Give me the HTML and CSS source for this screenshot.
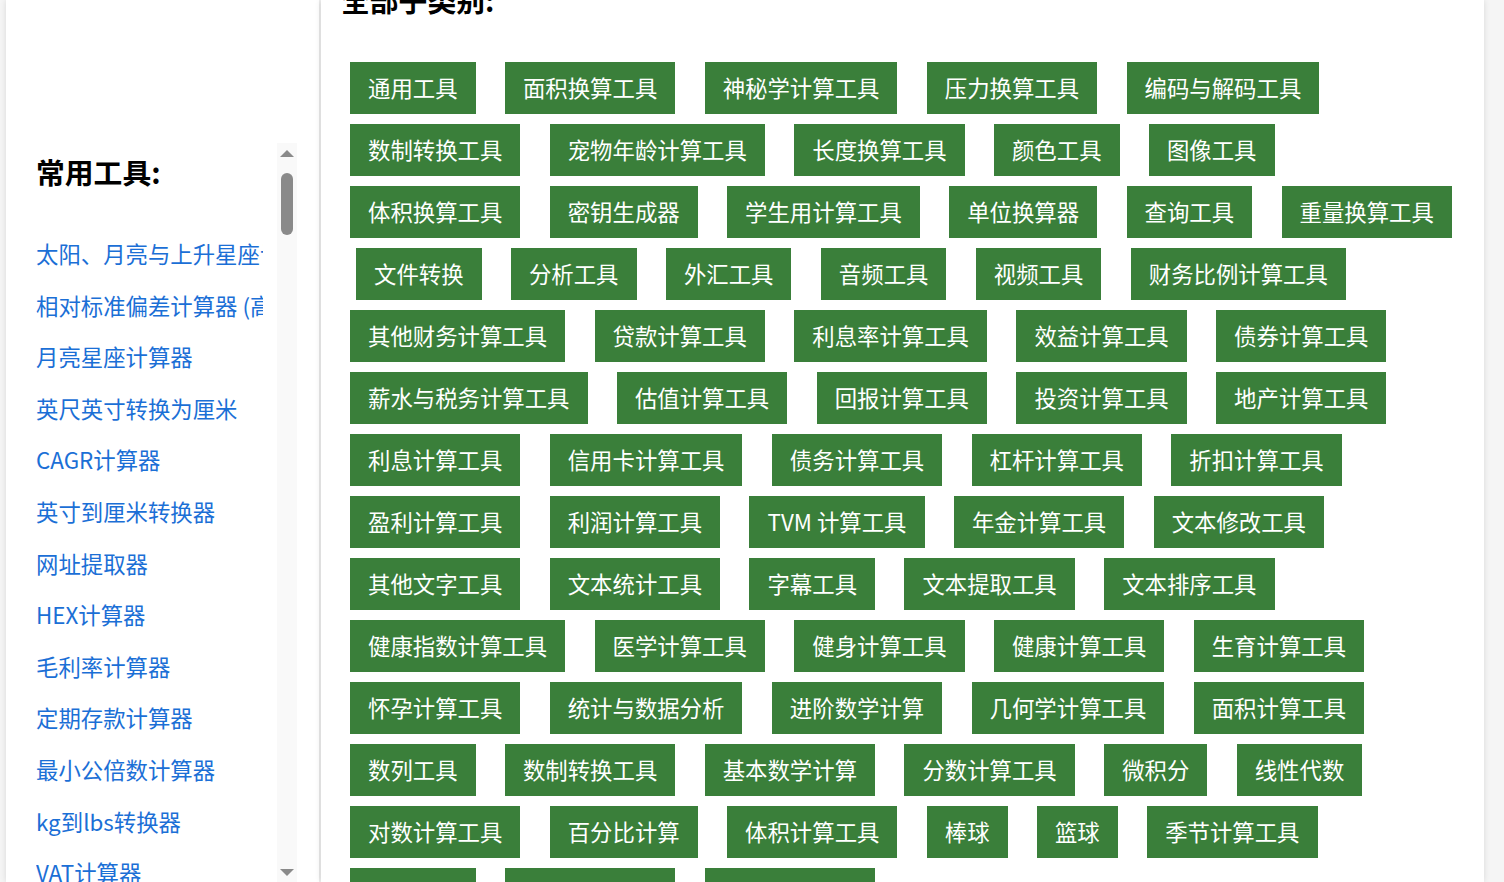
FILE: index.html
```html
<!DOCTYPE html>
<html lang="zh-CN">
<head>
<meta charset="utf-8">
<title>全部子类别</title>
<link rel="stylesheet" href="styles.css">
</head>
<body>
<div class="page">
  <aside class="sidebar">
    <div class="side-scroll">
      <div class="side-inner">
        <h2 class="side-title">常用工具:</h2>
        <ul class="tool-list">
          <li><a href="#">太阳、月亮与上升星座计算器</a></li>
          <li><a href="#">相对标准偏差计算器 (高级)</a></li>
          <li><a href="#">月亮星座计算器</a></li>
          <li><a href="#">英尺英寸转换为厘米</a></li>
          <li><a href="#">CAGR计算器</a></li>
          <li><a href="#">英寸到厘米转换器</a></li>
          <li><a href="#">网址提取器</a></li>
          <li><a href="#">HEX计算器</a></li>
          <li><a href="#">毛利率计算器</a></li>
          <li><a href="#">定期存款计算器</a></li>
          <li><a href="#">最小公倍数计算器</a></li>
          <li><a href="#">kg到lbs转换器</a></li>
          <li><a href="#">VAT计算器</a></li>
        </ul>
      </div>
      <div class="scrollbar" aria-hidden="true">
        <div class="sb-button"><span class="sb-arrow-up"></span></div>
        <div class="sb-track"><div class="sb-thumb"></div></div>
        <div class="sb-button sb-button-down"><span class="sb-arrow-down"></span></div>
      </div>
    </div>
  </aside>

  <main class="content">
    <h2 class="main-title">全部子类别:</h2>
    <div class="tags">
      <a class="tag" href="#">通用工具</a>
      <a class="tag" href="#">面积换算工具</a>
      <a class="tag" href="#">神秘学计算工具</a>
      <a class="tag" href="#">压力换算工具</a>
      <a class="tag" href="#">编码与解码工具</a>
      <a class="tag" href="#">数制转换工具</a>
      <a class="tag" href="#">宠物年龄计算工具</a>
      <a class="tag" href="#">长度换算工具</a>
      <a class="tag" href="#">颜色工具</a>
      <a class="tag" href="#">图像工具</a>
      <a class="tag" href="#">体积换算工具</a>
      <a class="tag" href="#">密钥生成器</a>
      <a class="tag" href="#">学生用计算工具</a>
      <a class="tag" href="#">单位换算器</a>
      <a class="tag" href="#">查询工具</a>
      <a class="tag" href="#">重量换算工具</a>
      <a class="tag tag-indent" href="#">文件转换</a>
      <a class="tag" href="#">分析工具</a>
      <a class="tag" href="#">外汇工具</a>
      <a class="tag" href="#">音频工具</a>
      <a class="tag" href="#">视频工具</a>
      <a class="tag" href="#">财务比例计算工具</a>
      <a class="tag" href="#">其他财务计算工具</a>
      <a class="tag" href="#">贷款计算工具</a>
      <a class="tag" href="#">利息率计算工具</a>
      <a class="tag" href="#">效益计算工具</a>
      <a class="tag" href="#">债券计算工具</a>
      <a class="tag" href="#">薪水与税务计算工具</a>
      <a class="tag" href="#">估值计算工具</a>
      <a class="tag" href="#">回报计算工具</a>
      <a class="tag" href="#">投资计算工具</a>
      <a class="tag" href="#">地产计算工具</a>
      <a class="tag" href="#">利息计算工具</a>
      <a class="tag" href="#">信用卡计算工具</a>
      <a class="tag" href="#">债务计算工具</a>
      <a class="tag" href="#">杠杆计算工具</a>
      <a class="tag" href="#">折扣计算工具</a>
      <a class="tag" href="#">盈利计算工具</a>
      <a class="tag" href="#">利润计算工具</a>
      <a class="tag" href="#">TVM 计算工具</a>
      <a class="tag" href="#">年金计算工具</a>
      <a class="tag" href="#">文本修改工具</a>
      <a class="tag" href="#">其他文字工具</a>
      <a class="tag" href="#">文本统计工具</a>
      <a class="tag" href="#">字幕工具</a>
      <a class="tag" href="#">文本提取工具</a>
      <a class="tag" href="#">文本排序工具</a>
      <a class="tag" href="#">健康指数计算工具</a>
      <a class="tag" href="#">医学计算工具</a>
      <a class="tag" href="#">健身计算工具</a>
      <a class="tag" href="#">健康计算工具</a>
      <a class="tag" href="#">生育计算工具</a>
      <a class="tag" href="#">怀孕计算工具</a>
      <a class="tag" href="#">统计与数据分析</a>
      <a class="tag" href="#">进阶数学计算</a>
      <a class="tag" href="#">几何学计算工具</a>
      <a class="tag" href="#">面积计算工具</a>
      <a class="tag" href="#">数列工具</a>
      <a class="tag" href="#">数制转换工具</a>
      <a class="tag" href="#">基本数学计算</a>
      <a class="tag" href="#">分数计算工具</a>
      <a class="tag" href="#">微积分</a>
      <a class="tag" href="#">线性代数</a>
      <a class="tag" href="#">对数计算工具</a>
      <a class="tag" href="#">百分比计算</a>
      <a class="tag" href="#">体积计算工具</a>
      <a class="tag" href="#">棒球</a>
      <a class="tag" href="#">篮球</a>
      <a class="tag" href="#">季节计算工具</a>
      <a class="tag" href="#">时间工具</a>
      <a class="tag" href="#">日期计算工具</a>
      <a class="tag" href="#">时间计算工具</a>
    </div>
  </main>
</div>
</body>
</html>
```

FILE: styles.css
```css
html, body {
  margin: 0;
  padding: 0;
  height: 100%;
  overflow: hidden;
}

body {
  background: #f5f5f5;
  font-family: "Noto Sans CJK SC", "Noto Sans", "Liberation Sans", sans-serif;
  color: #000;
}

.page {
  display: flex;
  align-items: stretch;
  height: 100vh;
  padding-left: 6px;
}

/* ---------- Sidebar ---------- */
.sidebar {
  flex: none;
  width: 313px;
  box-sizing: border-box;
  padding: 143px 22px 0 30px;
  background: #fff;
  box-shadow: 0 0 6px rgba(0, 0, 0, 0.12);
}

.side-scroll {
  display: flex;
  height: 740px;
}

.side-inner {
  flex: 1;
  min-width: 0;
  overflow: hidden;
  padding-right: 14px;
}

.scrollbar {
  flex: none;
  width: 20px;
  display: flex;
  flex-direction: column;
  background: #f9f9f9;
}

.sb-button {
  flex: none;
  height: 24px;
  display: flex;
  justify-content: center;
  align-items: flex-start;
  padding-top: 7px;
  box-sizing: border-box;
}

.sb-button-down {
  align-items: flex-end;
  padding-top: 0;
  padding-bottom: 7px;
}

.sb-arrow-up,
.sb-arrow-down {
  display: block;
  width: 0;
  height: 0;
  border-left: 7px solid transparent;
  border-right: 7px solid transparent;
}

.sb-arrow-up {
  border-bottom: 7px solid #8a8a8a;
}

.sb-arrow-down {
  border-top: 7px solid #8a8a8a;
}

.sb-track {
  flex: 1;
  padding-top: 6px;
}

.sb-thumb {
  width: 12px;
  height: 62px;
  margin: 0 auto;
  border-radius: 6px;
  background: #8a8a8a;
}

.side-title {
  margin: 11px 0 39px;
  font-size: 28.8px;
  line-height: 35px;
  font-weight: 700;
  color: #000;
}

.tool-list {
  list-style: none;
  margin: 0;
  padding: 0;
}

.tool-list li {
  padding: 9px 0;
  overflow: hidden;
  white-space: nowrap;
}

.tool-list a {
  font-size: 22.4px;
  line-height: 33.6px;
  color: #1b6fd6;
  text-decoration: none;
}

/* ---------- Main ---------- */
.content {
  flex: none;
  width: 1163px;
  box-sizing: border-box;
  margin-left: 2px;
  padding: 0 20px;
  background: #fff;
  box-shadow: 0 0 6px rgba(0, 0, 0, 0.12);
}

.main-title {
  margin: -18px 0 45px;
  font-size: 28.8px;
  line-height: 35px;
  font-weight: 700;
  color: #000;
}

.tags {
  display: flex;
  flex-wrap: wrap;
  column-gap: 29.4px;
  row-gap: 10px;
  margin-left: 9px;
}

.tag {
  display: block;
  padding: 9px 18px 11px;
  font-size: 22.4px;
  line-height: 32px;
  color: #fff;
  background: #3a7f3a;
  text-decoration: none;
  white-space: nowrap;
}

.tag-indent {
  margin-left: 6px;
}
```
